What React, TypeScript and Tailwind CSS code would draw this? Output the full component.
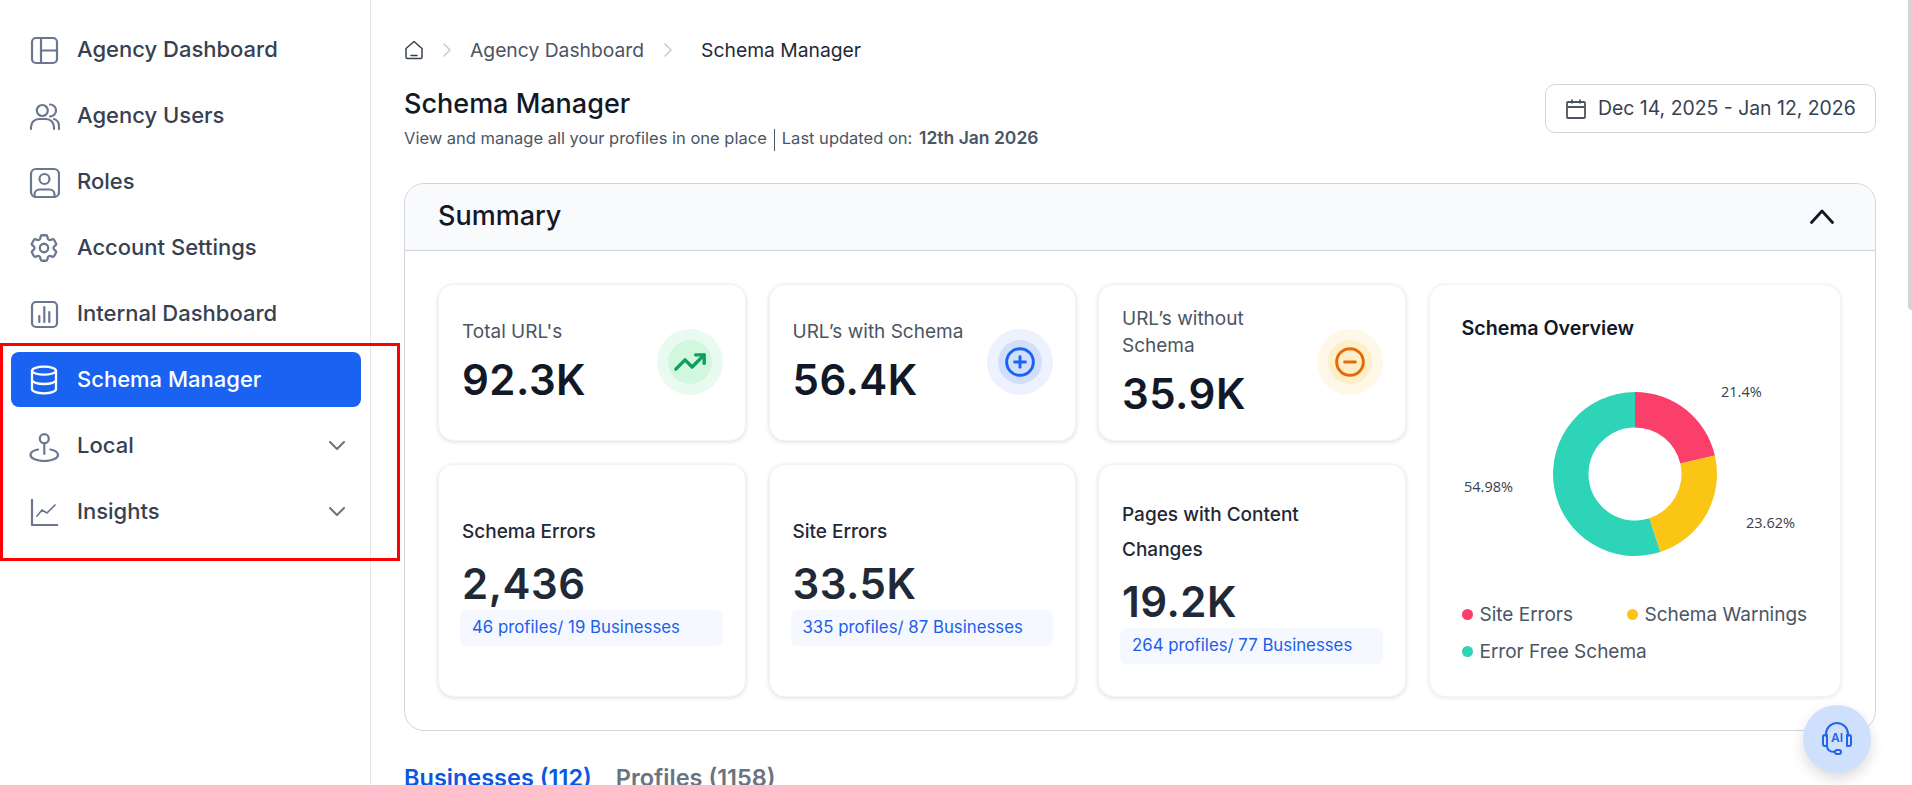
import { CircleMinus, CirclePlus, Database, TrendingUp } from "lucide-react";
import { HiOutlineCog6Tooth } from "react-icons/hi2";
import type { ReactNode } from "react";

const S = { fill: "none", stroke: "currentColor", strokeWidth: 2.2, strokeLinecap: "round" as const, strokeLinejoin: "round" as const };

function Svg({ children }: { children: ReactNode }) {
  return (
    <svg width="32" height="32" viewBox="0 0 32 32" {...S} className="shrink-0">
      {children}
    </svg>
  );
}

const icons: Record<string, ReactNode> = {
  dash: (
    <Svg>
      <rect x="4" y="4" width="25" height="25" rx="4" />
      <path d="M13 4v25M13 16.5h16" />
    </Svg>
  ),
  users: (
    <Svg>
      <circle cx="14.3" cy="10.5" r="5.5" />
      <path d="M22 4.5a6 6 0 0 1 0 12M3 29v-2a8 8 0 0 1 8-8h7a8 8 0 0 1 8 8v2M26 19a6.5 7.5 0 0 1 5 7.5V29" />
    </Svg>
  ),
  roles: (
    <Svg>
      <rect x="3" y="3" width="28" height="28" rx="5" />
      <circle cx="16.5" cy="13" r="5" />
      <path d="M6.5 30v-1.500a5 5 0 0 1 5-5h10a5 5 0 0 1 5 5V30" />
    </Svg>
  ),
  gear: <HiOutlineCog6Tooth size={34} strokeWidth={1.6} className="shrink-0 -mx-[1px]" />,
  chart: (
    <Svg>
      <rect x="4" y="4" width="25" height="25" rx="4" />
      <path d="M11.300 18v6M16.300 9v15M21.300 14v10" />
    </Svg>
  ),
  db: <Database size={32} strokeWidth={1.7} className="shrink-0" />,
  local: (
    <Svg>
      <circle cx="16.300" cy="8.700" r="4.500" />
      <path d="M16.300 13.200V24M10 19.500C5.500 20.300 2.500 22 2.500 25c0 3.500 6.500 6 13.800 6s13.700-2.500 13.700-6c0-3-3-4.700-7.500-5.500" />
    </Svg>
  ),
  insights: (
    <Svg>
      <path d="M4 3v26h26" strokeLinecap="butt" />
      <path d="M9 20l5-6 5 3 8-8" strokeWidth="1.700" />
    </Svg>
  ),
};

const nav = [
  ["dash", "Agency Dashboard"],
  ["users", "Agency Users"],
  ["roles", "Roles"],
  ["gear", "Account Settings"],
  ["chart", "Internal Dashboard"],
  ["db", "Schema Manager"],
  ["local", "Local"],
  ["insights", "Insights"],
];

function Chevron() {
  return (
    <svg width="16" height="10" viewBox="0 0 16 10" fill="none" stroke="#6b7280" strokeWidth="2" strokeLinecap="round" strokeLinejoin="round">
      <path d="M1 1l7 7 7-7" />
    </svg>
  );
}

function Crumb() {
  return (
    <svg width="8" height="14" viewBox="0 0 8 14" fill="none" stroke="#c4c9d2" strokeWidth="1.500" strokeLinecap="round" strokeLinejoin="round">
      <path d="M1 1l6 6-6 6" />
    </svg>
  );
}

function IconCircle({ outer, inner, children }: { outer: string; inner: string; children: ReactNode }) {
  return (
    <div className={`w-[66px] h-[66px] rounded-full flex items-center justify-center shrink-0 ${outer}`}>
      <div className={`w-[44px] h-[44px] rounded-full flex items-center justify-center ${inner}`}>{children}</div>
    </div>
  );
}

function TopCard({ label, value, icon }: { label: ReactNode; value: string; icon: ReactNode }) {
  return (
    <div className="h-[157px] rounded-2xl bg-white border border-gray-100 shadow-[0_1px_4px_rgba(0,0,0,0.14)] flex items-center justify-between pl-[23px] pr-[22px]">
      <div>
        <div className="text-[19px] leading-[27px] text-[#4b5563] w-[180px]">{label}</div>
        <div className="mt-[9px] text-[42px] leading-[52px] font-semibold text-[#111827] tracking-[0.5px]">{value}</div>
      </div>
      {icon}
    </div>
  );
}

function BottomCard({ label, value, a, b }: { label: ReactNode; value: string; a: string; b: string }) {
  return (
    <div className="h-[233px] rounded-2xl bg-white border border-gray-100 shadow-[0_1px_4px_rgba(0,0,0,0.14)] flex flex-col justify-center pl-[23px] pr-[22px]">
      <div className="text-[19px] leading-[35px] text-[#1f2937] font-medium w-[220px]">{label}</div>
      <div className="mt-[9px] text-[42px] leading-[52px] font-semibold text-[#1f2937] tracking-[0.5px]">{value}</div>
      <div className="h-[36px] rounded-md bg-[#f5f8ff] -ml-[2px] pl-[12px] flex items-center text-[16.800px] text-[#1d5fe8]">
        {a}/ {b}
      </div>
    </div>
  );
}

function Donut() {
  const cx = 171;
  const cy = 141;
  const R = 82;
  const r = 46.5;
  const pt = (rad: number, p: number) => {
    const t = (p / 100) * Math.PI * 2;
    return `${(cx + rad * Math.sin(t)).toFixed(2)} ${(cy - rad * Math.cos(t)).toFixed(2)}`;
  };
  const seg = (p0: number, p1: number) => {
    const large = p1 - p0 > 50 ? 1 : 0;
    return `M${pt(R, p0)}A${R} ${R} 0 ${large} 1 ${pt(R, p1)}L${pt(r, p1)}A${r} ${r} 0 ${large} 0 ${pt(r, p0)}Z`;
  };
  return (
    <svg width="345" height="240" viewBox="0 0 345 240" className="block -mt-[10px] ml-[2px]">
      <path d={seg(0, 21.4)} fill="#f93f6a" />
      <path d={seg(21.4, 45.02)} fill="#fbc515" />
      <path d={seg(45.02, 100)} fill="#2dd4b8" />
      <g fontSize="14.500" fill="#374151" fontFamily="'Open Sans', sans-serif">
        <text x="257" y="64">21.4%</text>
        <text x="0" y="159">54.98%</text>
        <text x="282" y="195">23.62%</text>
      </g>
    </svg>
  );
}

function Legend({ color, label, className }: { color: string; label: string; className?: string }) {
  return (
    <div className={`flex items-center gap-[7px] text-[19px] leading-[37px] text-[#4b5563] ${className ?? ""}`}>
      <span className={`w-[11px] h-[11px] rounded-full ${color}`} />
      {label}
    </div>
  );
}

export default function App() {
  return (
    <div className="relative flex h-[785px] w-[1912px] overflow-hidden bg-white font-['Inter',sans-serif]">
      <aside className="w-[371px] shrink-0 border-r border-[#e5e7eb] pt-[22px] pl-[11px] pr-[9px] flex flex-col gap-[11px]">
        {nav.map(([k, label]) => {
          const active = k === "db";
          return (
            <div
              key={k}
              className={`h-[55px] rounded-lg pl-[17px] pr-[16px] flex items-center gap-[17px] text-[22px] font-medium ${
                active ? "bg-[#1a62f2] text-white" : "text-[#374151]"
              }`}
            >
              <span className={active ? "text-white" : "text-[#6b7690]"}>{icons[k]}</span>
              <span className="flex-1">{label}</span>
              {(k === "local" || k === "insights") && <Chevron />}
            </div>
          );
        })}
      </aside>

      <main className="flex-1 pl-[33px] pr-[36px] pt-[36px] min-w-0">
        <div className="h-[28px] flex items-center text-[19.300px]">
          <svg width="20" height="20" viewBox="0 0 20 20" fill="none" stroke="#374151" strokeWidth="1.500" strokeLinecap="round" strokeLinejoin="round" className="shrink-0">
            <path d="M2 8.500L10 1.500l8 7V17a1.500 1.500 0 0 1-1.500 1.500h-13A1.500 1.500 0 0 1 2 17z" />
            <path d="M7 15.500h6" />
          </svg>
          <span className="ml-[19px]"><Crumb /></span>
          <span className="ml-[19px] text-[#4b5563]">Agency Dashboard</span>
          <span className="ml-[20px]"><Crumb /></span>
          <span className="ml-[29px] text-[#1f2937]">Schema Manager</span>
        </div>

        <div className="mt-[20px] flex items-start justify-between">
          <div className="pt-[3px]">
            <h1 className="text-[27px] leading-[34px] font-medium text-[#111827]">Schema Manager</h1>
            <p className="mt-[5px] text-[16.500px] leading-[24px] text-[#4b5563]">
              View and manage all your profiles in one place
              <span className="inline-block w-px h-[22px] bg-[#4b5563] align-middle mx-[7px]" />
              Last updated on: <b className="text-[17.500px] font-semibold ml-[2px]">12th Jan 2026</b>
            </p>
          </div>
          <div className="h-[49px] w-[331px] rounded-[10px] border border-[#d1d5db] flex items-center pl-[20px] gap-[12px] text-[19.400px] text-[#374151]">
            <svg width="20" height="20" viewBox="0 0 20 20" fill="none" stroke="#4b5563" strokeWidth="1.800" className="shrink-0">
              <rect x="1" y="3" width="18" height="16" rx="1" />
              <path d="M1 8h18M6 0.500v4M14 0.500v4" />
            </svg>
            Dec 14, 2025 - Jan 12, 2026
          </div>
        </div>

        <section className="mt-[32px] rounded-[20px] border border-[#d1d5db]">
          <div className="h-[67px] rounded-t-[20px] bg-[#f9fafb] border-b border-[#d1d5db] flex items-center justify-between pl-[33px] pr-[41px]">
            <h2 className="text-[27px] font-medium text-[#111827]">Summary</h2>
            <svg width="24" height="15" viewBox="0 0 24 15" fill="none" stroke="#111827" strokeWidth="2.800" strokeLinecap="round" strokeLinejoin="round">
              <path d="M1.500 13.500L12 2l10.500 11.500" />
            </svg>
          </div>
          <div className="p-[33px] grid grid-cols-[308px_307px_308px_412px] gap-x-[22.500px] gap-y-[23px]">
            <TopCard
              label="Total URL's"
              value="92.3K"
              icon={<IconCircle outer="bg-[#e9fbf0]" inner="bg-[#d2f7df]"><TrendingUp size={34} strokeWidth={2.4} className="text-[#0e9f5a]" /></IconCircle>}
            />
            <TopCard
              label="URL’s with Schema"
              value="56.4K"
              icon={<IconCircle outer="bg-[#edf2fe]" inner="bg-[#d2dffc]"><CirclePlus size={32} strokeWidth={2.2} className="text-[#1a62f2]" /></IconCircle>}
            />
            <TopCard
              label={<span className="block w-[150px]">URL’s without Schema</span>}
              value="35.9K"
              icon={<IconCircle outer="bg-[#fff8e8]" inner="bg-[#feefc8]"><CircleMinus size={32} strokeWidth={2.2} className="text-[#e56a05]" /></IconCircle>}
            />
            <div className="row-span-2 rounded-2xl bg-white border border-gray-100 shadow-[0_1px_4px_rgba(0,0,0,0.1)] pl-[32px] pt-[28px]">
              <div className="text-[19.700px] leading-[30px] font-semibold text-[#111827]">Schema Overview</div>
              <Donut />
              <div className="flex flex-wrap mt-[23px]">
                <Legend color="bg-[#f93f6a]" label="Site Errors" className="w-[165px]" />
                <Legend color="bg-[#fbc515]" label="Schema Warnings" />
                <Legend color="bg-[#2dd4b8]" label="Error Free Schema" className="w-full" />
              </div>
            </div>
            <BottomCard label="Schema Errors" value="2,436" a="46 profiles" b="19 Businesses" />
            <BottomCard label="Site Errors" value="33.5K" a="335 profiles" b="87 Businesses" />
            <BottomCard label="Pages with Content Changes" value="19.2K" a="264 profiles" b="77 Businesses" />
          </div>
        </section>

        <div className="mt-[32px] flex gap-[24px] text-[23.500px] leading-[30px] font-semibold">
          <span className="text-[#0b57e3]">Businesses (112)</span>
          <span className="text-[#6b7280]">Profiles (1158)</span>
        </div>
      </main>

      {/* annotation drawn over the sidebar */}
      <div className="absolute left-0 top-[343px] w-[400px] h-[218px] border-[3px] border-[#ff0000]" />

      {/* floating assistant button */}
      <div className="absolute left-[1803px] top-[705px] w-[68px] h-[68px] rounded-full bg-[#cfe0fd] shadow-[0_6px_14px_rgba(0,0,0,0.14)] flex items-center justify-center">
        <div className="relative w-[34px] h-[34px] flex items-center justify-center text-[#2563eb]">
          <svg width="34" height="34" viewBox="0 0 34 34" fill="none" stroke="currentColor" strokeWidth="2" strokeLinecap="round" strokeLinejoin="round" className="absolute inset-0">
            <path d="M6 14v-2a11 11 0 0 1 22 0v2M7 13H5a2 2 0 0 0-2 2v7a2 2 0 0 0 2 2h2zM27 13h2a2 2 0 0 1 2 2v7a2 2 0 0 1-2 2h-2zM7 24c0 4 3 6 8 6" />
            <rect x="15" y="28" width="6" height="4" rx="2" />
          </svg>
          <span className="relative text-[12px] leading-none font-semibold -mt-[3px]">AI</span>
        </div>
      </div>

      {/* page scrollbar thumb */}
      <div className="absolute right-0 top-0 w-[4px] h-[310px] rounded-bl-sm bg-[#d1d5db]" />
    </div>
  );
}
